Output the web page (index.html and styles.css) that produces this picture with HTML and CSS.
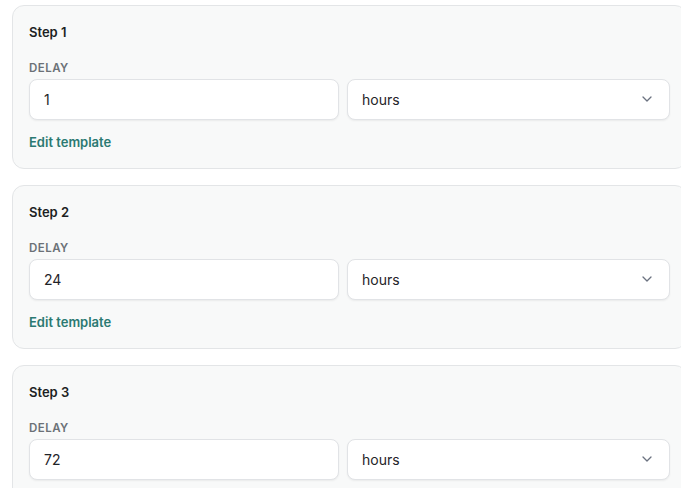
FILE: index.html
```html
<!DOCTYPE html>
<html>
<head>
    <meta charset="utf-8">
    <link rel="stylesheet" href="styles.css">
</head>
<body>
    <div class="steps">
        <!-- Step 1 -->
        <div class="step-card">
            <div class="step-title">Step 1</div>
            <label class="field-label" for="delay1">Delay</label>
            <div class="delay-row">
                <input type="text" id="delay1" class="delay-input" value="1" />
                <div class="select-wrapper">
                    <select class="unit-select">
                        <option>hours</option>
                        <option>days</option>
                    </select>
                    <svg class="chevron" width="10" height="6" viewBox="0 0 10 6"><path d="M1 1l4 4 4-4" fill="none" stroke="#6b7280" stroke-width="1.3" stroke-linecap="round" stroke-linejoin="round"/></svg>
                </div>
            </div>
            <a class="edit-link" href="#">Edit template</a>
        </div>

        <!-- Step 2 -->
        <div class="step-card">
            <div class="step-title">Step 2</div>
            <label class="field-label" for="delay2">Delay</label>
            <div class="delay-row">
                <input type="text" id="delay2" class="delay-input" value="24" />
                <div class="select-wrapper">
                    <select class="unit-select">
                        <option>hours</option>
                        <option>days</option>
                    </select>
                    <svg class="chevron" width="10" height="6" viewBox="0 0 10 6"><path d="M1 1l4 4 4-4" fill="none" stroke="#6b7280" stroke-width="1.3" stroke-linecap="round" stroke-linejoin="round"/></svg>
                </div>
            </div>
            <a class="edit-link" href="#">Edit template</a>
        </div>

        <!-- Step 3 -->
        <div class="step-card">
            <div class="step-title">Step 3</div>
            <label class="field-label" for="delay3">Delay</label>
            <div class="delay-row">
                <input type="text" id="delay3" class="delay-input" value="72" />
                <div class="select-wrapper">
                    <select class="unit-select">
                        <option>hours</option>
                        <option>days</option>
                    </select>
                    <svg class="chevron" width="10" height="6" viewBox="0 0 10 6"><path d="M1 1l4 4 4-4" fill="none" stroke="#6b7280" stroke-width="1.3" stroke-linecap="round" stroke-linejoin="round"/></svg>
                </div>
            </div>
            <a class="edit-link" href="#">Edit template</a>
        </div>
    </div>
</body>
</html>
```

FILE: styles.css
```css
html {
    overflow: hidden;
}
body {
    margin: 0;
    background: #fff;
    font-family: Inter, "Noto Sans", sans-serif;
    color: #1f2328;
}
.steps {
    display: flex;
    flex-direction: column;
    gap: 16px;
    padding: 5px 0 0 12px;
}
.step-card {
    width: 675px;
    box-sizing: border-box;
    display: flex;
    flex-direction: column;
    align-items: flex-start;
    padding: 16px;
    background: #f8f9f9;
    border: 1px solid #e3e5e7;
    border-radius: 12px;
}
.step-title {
    font-size: 13px;
    font-weight: 600;
    line-height: 20px;
    color: #1c1f23;
}
.field-label {
    margin-top: 18px;
    margin-bottom: 3px;
    font-size: 11.5px;
    font-weight: 600;
    line-height: 16px;
    text-transform: uppercase;
    letter-spacing: 0.04em;
    color: #6b7177;
}
.delay-row {
    display: grid;
    grid-template-columns: 310px 1fr;
    gap: 8px;
    width: 100%;
}
.delay-input,
.unit-select {
    width: 100%;
    height: 41px;
    box-sizing: border-box;
    padding: 0 14px;
    font-family: inherit;
    font-size: 14px;
    color: #1f2328;
    background: #fff;
    border: 1px solid #e1e3e6;
    border-radius: 8px;
    box-shadow: 0 1px 2px rgba(0, 0, 0, 0.06);
    outline: none;
}
.select-wrapper {
    position: relative;
}
.unit-select {
    appearance: none;
    -webkit-appearance: none;
}
.chevron {
    position: absolute;
    right: 18px;
    top: 17px;
    pointer-events: none;
}
.edit-link {
    margin-top: 12px;
    font-size: 13px;
    font-weight: 600;
    line-height: 20px;
    color: #2b7a72;
    text-decoration: none;
}
```
